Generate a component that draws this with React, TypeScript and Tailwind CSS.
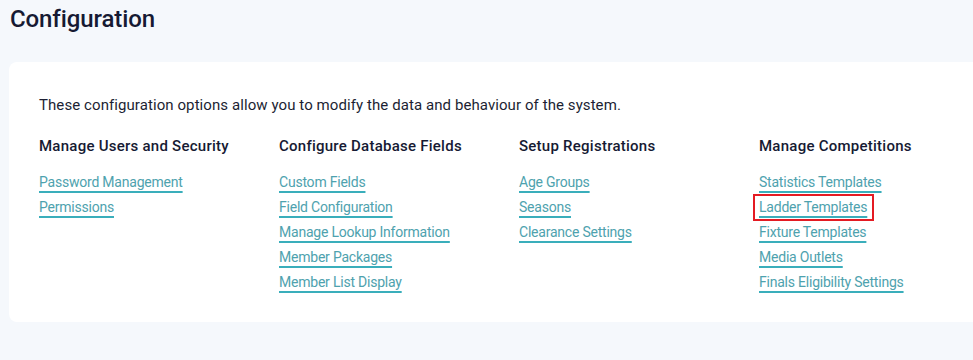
import React from "react";

const columns = [
  {
    title: "Manage Users and Security",
    links: ["Password Management", "Permissions"],
  },
  {
    title: "Configure Database Fields",
    links: [
      "Custom Fields",
      "Field Configuration",
      "Manage Lookup Information",
      "Member Packages",
      "Member List Display",
    ],
  },
  {
    title: "Setup Registrations",
    links: ["Age Groups", "Seasons", "Clearance Settings"],
  },
  {
    title: "Manage Competitions",
    links: [
      "Statistics Templates",
      "Ladder Templates",
      "Fixture Templates",
      "Media Outlets",
      "Finals Eligibility Settings",
    ],
  },
];

const linkClass =
  "text-[14px] tracking-[-0.22px] text-[#4ea2ae] underline underline-offset-[4px] decoration-[#3aaebb] decoration-[1.5px]";

export default function App() {
  return (
    <div
      className="w-[973px] h-[360px] overflow-hidden bg-[#f5f8fc] px-[9px]"
      style={{ fontFamily: "Roboto, 'Noto Sans', sans-serif" }}
    >
      {/* Title */}
      <h1 className="pt-[3px] pl-[1px] text-[24px] leading-[32px] font-medium text-[#161a33] tracking-[-0.1px]">
        Configuration
      </h1>

      {/* Card */}
      <div className="mt-[27px] w-[990px] h-[260px] bg-white rounded-[8px] pl-[30px] pt-[31px]">
        <p className="text-[15px] leading-[24px] text-[#1c1f33] tracking-[0.08px]">
          These configuration options allow you to modify the data and behaviour of the system.
        </p>

        <div className="grid grid-cols-[240px_240px_240px_240px] mt-[18px]">
          {columns.map((col) => (
            <div key={col.title}>
              <h3 className="text-[15px] leading-[22px] font-medium text-[#161a33] tracking-[0.25px]">
                {col.title}
              </h3>
              <ul className="mt-[13px] flex flex-col">
                {col.links.map((link) => (
                  <li key={link} className="h-[25px] flex items-center">
                    {link === "Ladder Templates" ? (
                      <span className="-ml-[6px] pl-[4px] pr-[5px] h-[27px] flex items-center border-2 border-[#e41b23]">
                        <a className={linkClass}>{link}</a>
                      </span>
                    ) : (
                      <a className={linkClass}>{link}</a>
                    )}
                  </li>
                ))}
              </ul>
            </div>
          ))}
        </div>
      </div>
    </div>
  );
}
